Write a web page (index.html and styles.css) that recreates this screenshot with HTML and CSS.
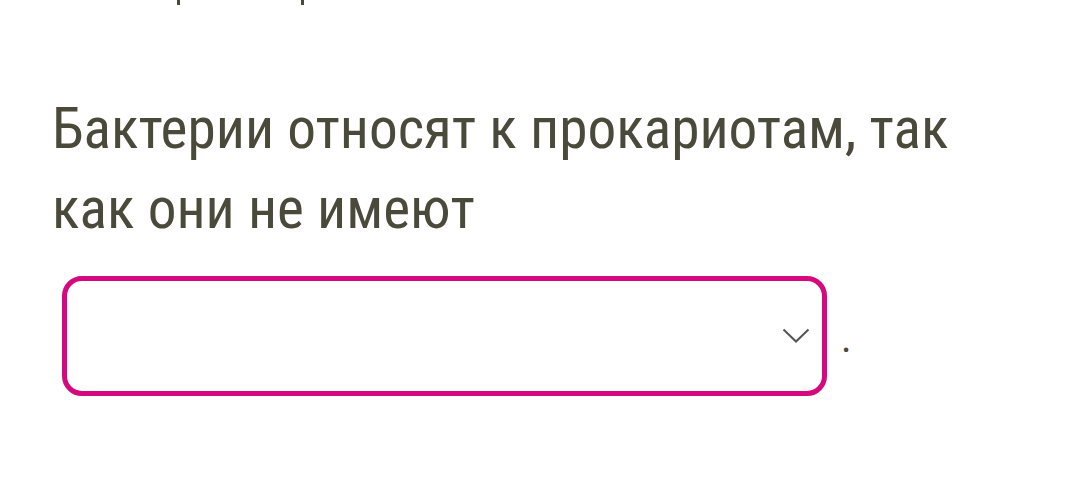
FILE: index.html
```html
<!DOCTYPE html>
<html lang="ru">
<head>
<meta charset="utf-8">
<link rel="stylesheet" href="styles.css">
</head>
<body>
<div class="page">
  <div class="prev-line" aria-hidden="true"><span class="tick t1"></span><span class="tick t2"></span></div>
  <p class="question">Бактерии относят к прокариотам, так как они не имеют</p>
  <div class="answer-row">
    <div class="select">
      <svg class="chevron" width="28" height="16" viewBox="0 0 28 16"><path d="M1.5 1.5 L14 13.5 L26.5 1.5" fill="none" stroke="#555555" stroke-width="2"/></svg>
    </div>
    <span class="dot">.</span>
  </div>
</div>
</body>
</html>
```

FILE: styles.css
```css
html, body {
  margin: 0;
  padding: 0;
  background: #ffffff;
}
.page {
  width: 1080px;
  height: 486px;
  overflow: hidden;
  font-family: "Roboto Condensed", "Roboto", "Liberation Sans Narrow", sans-serif;
  font-stretch: 75%;
  color: #4a4a3b;
}
.prev-line {
  display: flex;
  height: 5px;
  padding-left: 177px;
}
.tick {
  width: 3px;
  height: 5px;
  background: #4a4a3b;
}
.t2 {
  margin-left: 121px;
}
.question {
  margin: 84px 0 0 52px;
  width: 940px;
  font-size: 57.3px;
  line-height: 80px;
  font-weight: 400;
}
.answer-row {
  display: flex;
  align-items: center;
  margin: 27px 0 0 62px;
  gap: 14px;
}
.select {
  box-sizing: border-box;
  width: 765px;
  height: 120px;
  border: 5px solid #d6087f;
  border-radius: 20px;
  display: flex;
  align-items: center;
  justify-content: flex-end;
  padding-right: 12px;
}
.chevron {
  display: block;
}
.dot {
  font-size: 40px;
  line-height: 40px;
  margin-top: 6px;
}
```
